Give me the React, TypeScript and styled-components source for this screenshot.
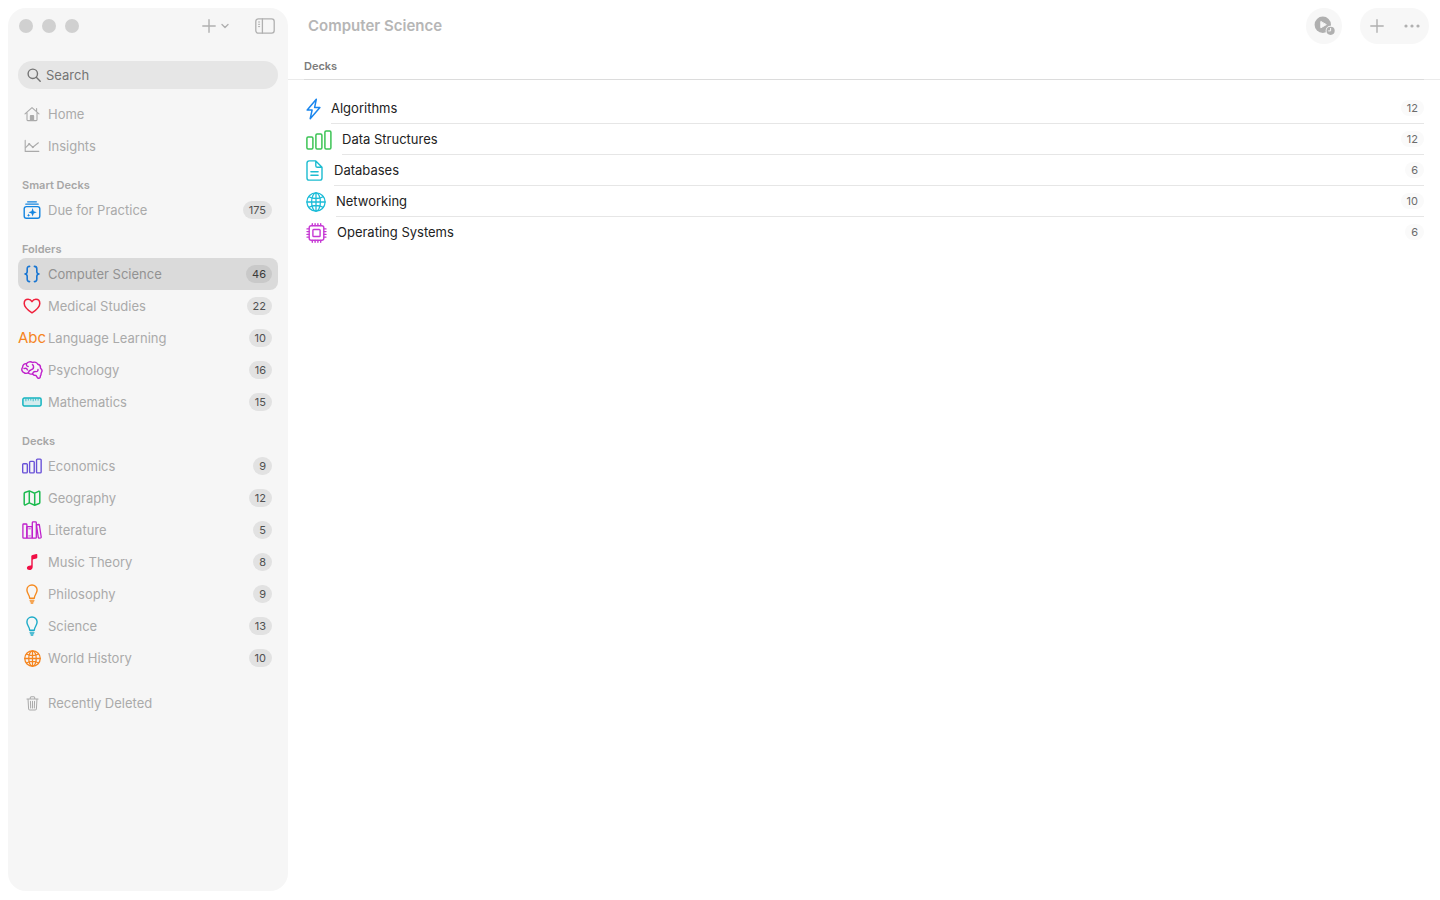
import React from "react";
import styled, { createGlobalStyle } from "styled-components";

const GlobalStyle = createGlobalStyle`
  *, *::before, *::after { box-sizing: border-box; }
  body {
    margin: 0;
    background: #ffffff;
    color: #222222;
    font-family: Inter, "Liberation Sans", sans-serif;
    font-size: 13px;
    line-height: 18px;
  }
  button, input { font: inherit; }
`;

const Window = styled.div`
  display: flex;
  min-height: 100vh;
  padding: 8px 0 9px 8px;
`;

const Sidebar = styled.aside`
  flex: none;
  width: 280px;
  padding: 0 10px 24px;
  border-radius: 18px;
  background: #f6f6f6;
`;

const SidebarBar = styled.div`
  display: flex;
  align-items: center;
  height: 36px;
  margin-bottom: 17px;
  padding: 0 1px;
`;

const WindowControls = styled.div`
  display: flex;
  gap: 9px;
  margin-right: auto;
`;

const WindowDot = styled.button`
  width: 14px;
  height: 14px;
  padding: 0;
  border: 0;
  border-radius: 50%;
  background: #d0d0d0;
`;

const IconButton = styled.button<{ $width?: number; $height?: number }>`
  display: flex;
  align-items: center;
  justify-content: center;
  width: ${(p) => p.$width ?? 28}px;
  height: ${(p) => p.$height ?? 24}px;
  padding: 0;
  border: 0;
  background: transparent;
  color: #b0b0b0;
`;

const PanelToggle = styled(IconButton)`
  margin-left: 22px;
`;

const SearchField = styled.label`
  display: flex;
  align-items: center;
  gap: 5px;
  height: 28px;
  margin-bottom: 9px;
  padding: 0 9px;
  border-radius: 14px;
  background: #e6e6e6;
  color: #747474;
`;

const SearchInput = styled.input`
  flex: 1;
  min-width: 0;
  padding: 0;
  border: 0;
  outline: 0;
  background: transparent;
  color: #444444;
  &::placeholder { color: #747474; opacity: 1; }
`;

const SectionTitle = styled.h2`
  margin: 0;
  padding: 14px 4px 0;
  color: #a6a6a6;
  font-size: 11px;
  font-weight: 600;
  line-height: 18px;
`;

const List = styled.ul`
  margin: 0;
  padding: 0;
  list-style: none;
`;

const TrashList = styled(List)`
  margin-top: 13px;
`;

const SideLink = styled.a<{ $selected?: boolean }>`
  display: flex;
  align-items: center;
  gap: 2px;
  height: 32px;
  padding-right: 6px;
  border-radius: 8px;
  background: ${(p) => (p.$selected ? "#dadada" : "transparent")};
  color: ${(p) => (p.$selected ? "#929292" : "#aaaaaa")};
  text-decoration: none;
`;

const IconSlot = styled.span<{ $color: string }>`
  display: flex;
  flex: none;
  align-items: center;
  justify-content: center;
  width: 28px;
  color: ${(p) => p.$color};
`;

const SideLabel = styled.span`
  flex: 1;
`;

const SideCount = styled.span<{ $selected?: boolean }>`
  min-width: 18px;
  padding: 0 6px;
  border-radius: 9px;
  background: ${(p) => (p.$selected ? "#c9c9c9" : "#e2e2e2")};
  color: ${(p) => (p.$selected ? "#3a3a3a" : "#505050")};
  font-size: 11px;
  font-weight: 400;
  line-height: 18px;
  text-align: center;
`;

const AbcGlyph = styled.span`
  font-size: 15px;
`;

const Main = styled.main`
  flex: 1;
  min-width: 0;
`;

const Toolbar = styled.header`
  display: flex;
  align-items: center;
  gap: 18px;
  height: 36px;
  padding: 0 11px 0 20px;
`;

const Title = styled.h1`
  flex: 1;
  margin: 0;
  color: #b6b6b6;
  font-size: 15px;
  font-weight: 600;
  line-height: 20px;
`;

const ToolGroup = styled.div`
  display: flex;
  border-radius: 18px;
  background: #f7f7f7;
`;

const ListHeading = styled.div`
  padding: 13px 16px 0;
  border-bottom: 1px solid #ebebeb;
`;

const ListTitle = styled.h2`
  margin: 0 0 -1px;
  padding-bottom: 4px;
  border-bottom: 1px solid #dcdcdc;
  color: #7c7c7c;
  font-size: 11px;
  font-weight: 600;
  line-height: 18px;
`;

const DeckList = styled(List)`
  padding: 13px 16px 0 18px;
`;

const DeckLink = styled.a`
  display: flex;
  align-items: center;
  gap: 10px;
  height: 31px;
  color: #222222;
  text-decoration: none;
`;

const DeckIcon = styled.span<{ $color: string }>`
  display: flex;
  flex: none;
  color: ${(p) => p.$color};
`;

const DeckBody = styled.span`
  display: flex;
  flex: 1;
  align-items: center;
  align-self: stretch;
  justify-content: space-between;
  border-bottom: 1px solid #e6e6e6;
  li:last-child & { border-bottom-color: transparent; }
`;

const DeckCount = styled.span`
  padding: 0 6px;
  border-radius: 8px;
  background: #fafafa;
  color: #6c6c6c;
  font-size: 11px;
  font-weight: 400;
  line-height: 16px;
`;

type SvgProps = { w: number; h: number; sw?: number; vb?: string; children: React.ReactNode };
const Svg = ({ w, h, sw = 1.4, vb, children }: SvgProps) => (
  <svg width={w} height={h} viewBox={vb ?? `0 0 ${w} ${h}`} fill="none" stroke="currentColor"
    strokeWidth={sw} strokeLinecap="round" strokeLinejoin="round" aria-hidden="true">
    {children}
  </svg>
);

const Plus = () => <Svg w={14} h={14} sw={1.4}><path d="M7 .8v12.4M.8 7h12.4" /></Svg>;
const Chevron = () => <Svg w={8} h={6} sw={1.4}><path d="M1 1.4l3 3 3-3" /></Svg>;
const Panel = () => (
  <Svg w={20} h={16} sw={1.3}>
    <rect x=".8" y=".8" width="18.4" height="14.4" rx="2.6" />
    <path d="M7.4 1v14" />
    <path d="M3.500 4h1.200M3.500 6.300h1.200M3.500 8.600h1.200" strokeWidth="1" />
  </Svg>
);
const Magnifier = () => (
  <Svg w={14} h={14} sw={1.4}><circle cx="5.8" cy="5.8" r="4.7" /><path d="M9.3 9.3l3.9 3.9" /></Svg>
);
const Home = () => (
  <Svg w={16} h={16} sw={1.1}>
    <path d="M1 7.9L8 1.6l7 6.3M12.6 5.3V2.6M3 6.8v7c0 .5.3.8.8.8h8.4c.5 0 .8-.3.8-.8v-7" />
    <path d="M6.4 14.4V10c0-.3.2-.5.5-.5h2.2c.3 0 .5.2.5.5v4.4z" fill="currentColor" />
  </Svg>
);
const Insights = () => (
  <Svg w={16} h={14} sw={1.1}>
    <path d="M1.2 1.4v11h13.6" />
    <path d="M1.6 8.600L5.200 5l3.600 3.200 5.600-4.400" />
    <g fill="currentColor" stroke="none"><circle cx="5.2" cy="5.1" r="1.1" /><circle cx="8.8" cy="8.1" r="1.1" /></g>
  </Svg>
);
const SmartStack = () => (
  <Svg w={18} h={18} sw={1.4}>
    <rect x="1.2" y="5.600" width="15.600" height="11.600" rx="2.2" />
    <path d="M2.800 3.200h12.400M4.600 .8h8.800" strokeWidth="1.2" />
    <path d="M9.600 7.100l1.100 3.100 3.100 1.100-3.100 1.100-1.100 3.100-1.100-3.100-3.100-1.100 3.100-1.100zM5.600 12.400l.5 1.300 1.300.5-1.300.5-.5 1.300-.5-1.300-1.300-.5 1.300-.5z" fill="currentColor" stroke="none" />
  </Svg>
);
const Braces = () => (
  <Svg w={16} h={18} sw={1.600}>
    <path d="M5.600 1.400C3.800 1.400 3.200 2.200 3.200 3.700v2.700C3.200 8 2.600 8.800 1 9c1.600.2 2.200 1 2.200 2.600v2.700c0 1.500.6 2.300 2.400 2.300M10.400 1.400c1.800 0 2.400.8 2.400 2.300v2.700c0 1.600.6 2.400 2.200 2.600-1.600.2-2.200 1-2.200 2.600v2.700c0 1.500-.6 2.300-2.400 2.300" />
  </Svg>
);
const Heart = () => (
  <Svg w={18} h={16} sw={1.5}>
    <path d="M9 14.800C4.300 11.700 1.200 8.800 1.200 5.400 1.200 2.900 2.900 1.200 5.100 1.200c1.700 0 3.100 1 3.900 2.500.8-1.500 2.200-2.500 3.900-2.500 2.200 0 3.900 1.700 3.900 4.200 0 3.400-3.100 6.300-7.800 9.400z" />
  </Svg>
);
const Brain = () => (
  <Svg w={22} h={18} sw={1.4}>
    <path d="M3 11.600C.7 10.800.1 7.900 1.700 6.300 1.500 4 3.400 2.300 5.500 2.700 6.800.7 9.800.3 11.500 1.500c2.200-.9 4.600 0 5.300 1.800 1.900.5 2.900 2 2.600 3.600 1.700 1.500 1.900 3.800.7 5.200.2 1.200-.1 2.100-.8 2.800.2 1.300-.2 2-.9 2.300-1 .3-1.900-.1-2.300-1l-1-1.700c-1.600.1-3-.6-3.600-1.700-1.700.6-3.300.2-4.200-.9-1.600.6-3.300.5-4.300-.3z" />
    <path d="M5.500 2.800c-.4 1.400.3 2.500 1.700 2.700M3 7.600c1.600-.6 3 0 3.500 1.300M7.300 11.800c.3-1.900 1.500-2.700 3-3.100 1.600-.5 2.500-1.600 2.200-3.400-.1-.7-.5-1.300-1.100-1.600M11.600 12.700c.4-1.600 1.700-2.400 3.200-2.100 1.500.2 2.300-.8 2.200-2.100" />
  </Svg>
);
const Ruler = () => (
  <Svg w={20} h={10} sw={1.5}>
    <rect x=".9" y="1" width="18.2" height="8" rx="1.4" fill="currentColor" fillOpacity=".15" />
    <path d="M3.900 2v1.900M6.300 2v1.200M8.800 2v1.200M11.200 2v1.900M13.600 2v1.200M16.100 2v1.200" strokeWidth=".8" />
  </Svg>
);
const Bars = ({ large }: { large?: boolean }) => (
  <Svg w={large ? 26 : 20} h={large ? 20 : 16} vb="0 0 26 20" sw={large ? 1.5 : 1.8}>
    <rect x=".9" y="7" width="6" height="12" rx="1.2" />
    <rect x="9.900" y="4" width="6" height="15" rx="1.2" />
    <rect x="18.900" y="1" width="6" height="18" rx="1.2" />
  </Svg>
);
const MapIcon = () => (
  <Svg w={18} h={16} sw={1.5}>
    <path d="M1.200 3.600c0-.5.200-.8.700-1.100L6.300.9l5.400 2.300 3.900-1.900c.7-.3 1.200 0 1.200.7v10.400c0 .5-.2.8-.7 1.100l-4.400 1.700-5.400-2.300-3.900 1.900c-.7.3-1.200 0-1.200-.7zM6.300 1v11.800M11.700 3.200v11.900" />
  </Svg>
);
const Books = () => (
  <Svg w={20} h={18} sw={1.3}>
    <rect x=".9" y="3" width="4" height="14.200" rx=".8" />
    <rect x="4.900" y="5.600" width="5.400" height="11.600" rx=".8" />
    <rect x="10.300" y=".9" width="4" height="16.300" rx=".8" />
    <path d="M14.500 4l2.200-.5c.4-.1.600.1.700.5l1.800 12c0 .4-.1.700-.5.800l-1.700.3c-.4 0-.6-.2-.7-.6z" />
    <path d="M6.800 7.800h1.600M6.800 14.900h1.600" strokeWidth=".8" />
  </Svg>
);
const Note = () => (
  <Svg w={12} h={18}>
    <path d="M5.300 12V3.600c0-1 .4-1.500 1.300-1.700l3.700-.9c.6-.1 1 .2 1 .8v2.800c0 .5-.3.8-.8.9l-3.200.8c-.4.1-.6.300-.6.700V14c0 1.900-1.500 3.100-3.400 3.100-1.400 0-2.400-.8-2.400-2 0-1.300.9-2.100 2.300-2.300l1.300-.2c.5-.1.800-.2.800-.6z" fill="currentColor" stroke="none" />
  </Svg>
);
const Bulb = () => (
  <Svg w={12} h={20} sw={1.4}>
    <path d="M3.700 14.200C3.700 10.900.9 9.500.9 6 .9 3.100 3.100 1 6 1s5.100 2.100 5.100 5c0 3.500-2.800 4.900-2.800 8.200z" />
    <path d="M4 16.200h4M4.300 17.700h3.400M5.100 19.100h1.800" strokeWidth="1.1" />
  </Svg>
);
const Globe = ({ size, sw }: { size: number; sw: number }) => (
  <Svg w={size} h={size} vb="0 0 20 20" sw={sw}>
    <circle cx="10" cy="10" r="9.1" /><ellipse cx="10" cy="10" rx="4.4" ry="9.1" />
    <path d="M10 .9v18.200M.9 10h18.200M3 4.700c3.900 2.400 10.100 2.400 14 0M3 15.300c3.900-2.400 10.100-2.400 14 0" />
  </Svg>
);
const Trash = () => (
  <Svg w={13} h={15} vb="0 0 14 16" sw={1.1}>
    <path d="M1 3.200h12M4.600 3V1.900c0-.7.400-1.100 1.100-1.100h2.600c.7 0 1.100.4 1.100 1.100V3M2.200 3.400l.6 10.300c.1.900.6 1.400 1.400 1.400h5.600c.8 0 1.300-.5 1.400-1.400l.6-10.300M4.800 5.600l.2 7.200M7 5.600v7.200M9.200 5.600L9 12.800" />
  </Svg>
);
const Bolt = () => (
  <Svg w={15} h={22} sw={1.5}>
    <path d="M10.300 1.300L1.200 12.100h4.900L4.200 20.700 13.900 9.600H8.600z" />
  </Svg>
);
const Doc = () => (
  <Svg w={18} h={21} sw={1.4}>
    <path d="M9.800.9H3.200C1.800.9 1 1.700 1 3.100v14.800c0 1.400.8 2.200 2.200 2.200h10.600c1.400 0 2.200-.8 2.200-2.200V7.300zM9.800 1v4.700c0 1.100.5 1.600 1.600 1.600H16M4.900 11.700h7.200M4.900 15.300h7.200" />
  </Svg>
);
const Chip = () => (
  <Svg w={21} h={20} sw={1.4}>
    <rect x="3.200" y="2.800" width="14.600" height="14.400" rx="2" />
    <rect x="6.900" y="6.500" width="7.200" height="7" rx=".8" />
    <path d="M6.300 2.600V.8M9.100 2.600V.8M11.900 2.600V.8M14.700 2.600V.8M6.300 19.200v-1.800M9.100 19.200v-1.800M11.900 19.200v-1.800M14.700 19.200v-1.800M3 5.900H1M3 8.600H1M3 11.400H1M3 14.100H1M20 5.900h-2M20 8.600h-2M20 11.400h-2M20 14.100h-2" />
  </Svg>
);
const PlayClock = () => (
  <Svg w={22} h={20} vb="-1 0 22 20" sw={1}>
    <circle cx="8.800" cy="8.800" r="8.200" fill="#b0b0b0" stroke="none" />
    <path d="M6.800 5.800v6l5.200-3z" fill="#f7f7f7" stroke="#f7f7f7" />
    <circle cx="16.600" cy="14.800" r="5" fill="#f7f7f7" stroke="none" />
    <circle cx="16.600" cy="14.800" r="4.100" fill="#b0b0b0" stroke="none" />
    <path d="M16.600 12.400v2.500h-2" stroke="#f7f7f7" />
  </Svg>
);
const Dots = () => (
  <Svg w={16} h={4}>
    <g fill="currentColor" stroke="none"><circle cx="2" cy="2" r="1.6" /><circle cx="8" cy="2" r="1.6" /><circle cx="14" cy="2" r="1.6" /></g>
  </Svg>
);

type Item = { label: string; icon: React.ReactNode; color: string; count?: number; selected?: boolean };

const places: Item[] = [
  { label: "Home", icon: <Home />, color: "#aaaaaa" },
  { label: "Insights", icon: <Insights />, color: "#aaaaaa" },
];
const smartDecks: Item[] = [
  { label: "Due for Practice", icon: <SmartStack />, color: "#1585e0", count: 175 },
];
const folders: Item[] = [
  { label: "Computer Science", icon: <Braces />, color: "#1976d2", count: 46, selected: true },
  { label: "Medical Studies", icon: <Heart />, color: "#f0203c", count: 22 },
  { label: "Language Learning", icon: <AbcGlyph aria-hidden="true">Abc</AbcGlyph>, color: "#f5851f", count: 10 },
  { label: "Psychology", icon: <Brain />, color: "#bf1fcb", count: 16 },
  { label: "Mathematics", icon: <Ruler />, color: "#14b4c0", count: 15 },
];
const decks: Item[] = [
  { label: "Economics", icon: <Bars />, color: "#6a52d8", count: 9 },
  { label: "Geography", icon: <MapIcon />, color: "#1dbb50", count: 12 },
  { label: "Literature", icon: <Books />, color: "#bf1fcb", count: 5 },
  { label: "Music Theory", icon: <Note />, color: "#f00f45", count: 8 },
  { label: "Philosophy", icon: <Bulb />, color: "#f58a1f", count: 9 },
  { label: "Science", icon: <Bulb />, color: "#1cabc8", count: 13 },
  { label: "World History", icon: <Globe size={17} sw={1.5} />, color: "#f5851f", count: 10 },
];
const trash: Item[] = [{ label: "Recently Deleted", icon: <Trash />, color: "#aaaaaa" }];

const folderDecks: Item[] = [
  { label: "Algorithms", icon: <Bolt />, color: "#1a86ee", count: 12 },
  { label: "Data Structures", icon: <Bars large />, color: "#3cc455", count: 12 },
  { label: "Databases", icon: <Doc />, color: "#1cbcd0", count: 6 },
  { label: "Networking", icon: <Globe size={20} sw={1.3} />, color: "#1cbcd8", count: 10 },
  { label: "Operating Systems", icon: <Chip />, color: "#c63ad4", count: 6 },
];

const SideItems = ({ items }: { items: Item[] }) => (
  <>
    {items.map((item) => (
      <li key={item.label}>
        <SideLink href="#" $selected={item.selected} aria-current={item.selected ? "page" : undefined}>
          <IconSlot $color={item.color}>{item.icon}</IconSlot>
          <SideLabel>{item.label}</SideLabel>
          {item.count !== undefined && <SideCount $selected={item.selected}>{item.count}</SideCount>}
        </SideLink>
      </li>
    ))}
  </>
);

export default function App() {
  return (
    <>
      <GlobalStyle />
      <Window>
        <Sidebar>
          <SidebarBar>
            <WindowControls>
              <WindowDot aria-label="Close" />
              <WindowDot aria-label="Minimize" />
              <WindowDot aria-label="Zoom" />
            </WindowControls>
            <IconButton $width={20} aria-label="Add"><Plus /></IconButton>
            <IconButton $width={12} aria-label="Add options"><Chevron /></IconButton>
            <PanelToggle $width={24} aria-label="Toggle sidebar"><Panel /></PanelToggle>
          </SidebarBar>
          <SearchField>
            <Magnifier />
            <SearchInput type="text" placeholder="Search" aria-label="Search" />
          </SearchField>
          <nav>
            <List><SideItems items={places} /></List>
            <SectionTitle>Smart Decks</SectionTitle>
            <List><SideItems items={smartDecks} /></List>
            <SectionTitle>Folders</SectionTitle>
            <List><SideItems items={folders} /></List>
            <SectionTitle>Decks</SectionTitle>
            <List><SideItems items={decks} /></List>
            <TrashList><SideItems items={trash} /></TrashList>
          </nav>
        </Sidebar>
        <Main>
          <Toolbar>
            <Title>Computer Science</Title>
            <ToolGroup>
              <IconButton $width={36} $height={36} aria-label="Practice due cards"><PlayClock /></IconButton>
            </ToolGroup>
            <ToolGroup>
              <IconButton $width={34} $height={36} aria-label="Add deck"><Plus /></IconButton>
              <IconButton $width={35} $height={36} aria-label="More"><Dots /></IconButton>
            </ToolGroup>
          </Toolbar>
          <ListHeading><ListTitle>Decks</ListTitle></ListHeading>
          <DeckList>
            {folderDecks.map((deck) => (
              <li key={deck.label}>
                <DeckLink href="#">
                  <DeckIcon $color={deck.color}>{deck.icon}</DeckIcon>
                  <DeckBody>
                    {deck.label}
                    <DeckCount>{deck.count}</DeckCount>
                  </DeckBody>
                </DeckLink>
              </li>
            ))}
          </DeckList>
        </Main>
      </Window>
    </>
  );
}
